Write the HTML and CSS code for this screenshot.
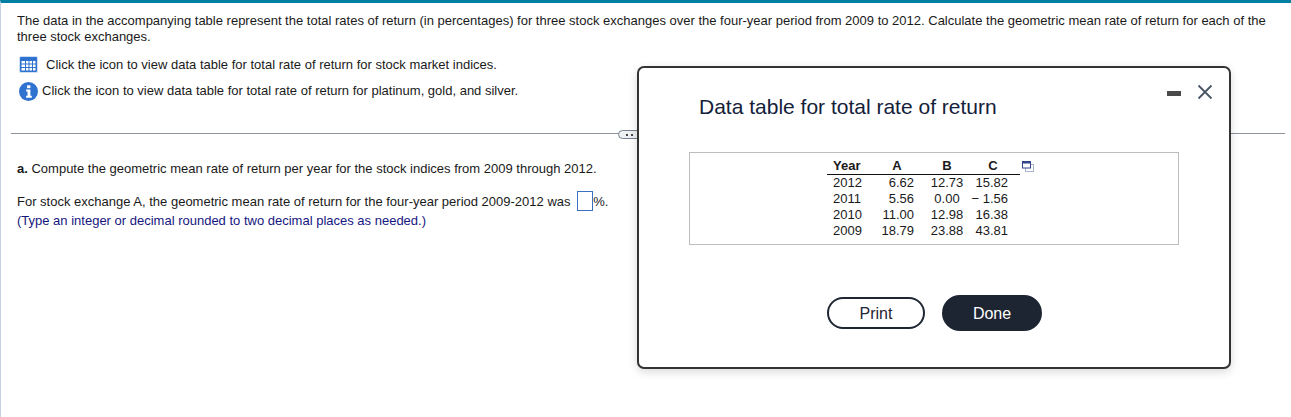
FILE: index.html
```html
<!DOCTYPE html>
<html lang="en">
<head>
    <meta charset="UTF-8">
    <title>Data table for total rate of return</title>
    <link rel="stylesheet" href="styles.css">
</head>
<body>
    <div class="page">
        <section class="question">
            <p class="intro">The data in the accompanying table represent the total rates of return (in percentages) for three stock exchanges over the four-year period from 2009 to 2012. Calculate the geometric mean rate of return for each of the three stock exchanges.</p>
            <div class="link-row link-grid">
                <svg class="icon" width="19" height="17" viewBox="0 0 19 17">
                    <rect x="0" y="0" width="19" height="17" rx="1.500" fill="#cfe0f6"/>
                    <rect x="1" y="1" width="17" height="15" rx="1" fill="#2f72cf"/>
                    <path d="M2.500 5h3.500v2.500H2.500zM7 5h2.500v2.500H7zM10.500 5H13v2.500h-2.500zM14 5h2.500v2.500H14zM2.500 8.500h3.500V11H2.500zM7 8.500h2.500V11H7zM10.500 8.500H13V11h-2.500zM14 8.500h2.500V11H14zM2.500 12h3.500v2.500H2.500zM7 12h2.500v2.500H7zM10.500 12H13v2.500h-2.500zM14 12h2.500v2.500H14z" fill="#fff"/>
                </svg>
                <span>Click the icon to view data table for total rate of return for stock market indices.</span>
            </div>
            <div class="link-row link-info">
                <svg class="icon" width="19" height="19" viewBox="0 0 20 20">
                    <circle cx="10" cy="10" r="10" fill="#2f72cf"/>
                    <rect x="8.500" y="3.500" width="3.500" height="3" fill="#fff"/>
                    <path d="M7.500 8h4.500v6.500h1.500v2h-6v-2h1.500v-4.500h-1.500z" fill="#fff"/>
                </svg>
                <span>Click the icon to view data table for total rate of return for platinum, gold, and silver.</span>
            </div>
        </section>

        <div class="divider"><span class="more"><i></i><i></i></span></div>

        <section class="answer">
            <p class="part"><b>a.</b> Compute the geometric mean rate of return per year for the stock indices from 2009 through 2012.</p>
            <p class="fill">For stock exchange A, the geometric mean rate of return for the four-year period 2009-2012 was <span class="blank"></span>%.</p>
            <p class="hint">(Type an integer or decimal rounded to two decimal places as needed.)</p>
        </section>
    </div>

    <div class="dialog">
        <div class="dialog-controls">
            <span class="minimize"></span>
            <svg width="16" height="16" viewBox="0 0 16 16">
                <path d="M1.500 1.500l13 13M14.500 1.500l-13 13" stroke="#4a5564" stroke-width="1.800" fill="none"/>
            </svg>
        </div>
        <h2>Data table for total rate of return</h2>
        <div class="table-box">
            <table class="rates">
                <thead>
                    <tr><th class="col-year">Year</th><th class="col-a">A</th><th class="col-b">B</th><th class="col-c">C</th></tr>
                </thead>
                <tbody>
                    <tr><td class="col-year">2012</td><td class="col-a">6.62</td><td class="col-b">12.73</td><td class="col-c">15.82</td></tr>
                    <tr><td class="col-year">2011</td><td class="col-a">5.56</td><td class="col-b">0.00</td><td class="col-c">&minus; 1.56</td></tr>
                    <tr><td class="col-year">2010</td><td class="col-a">11.00</td><td class="col-b">12.98</td><td class="col-c">16.38</td></tr>
                    <tr><td class="col-year">2009</td><td class="col-a">18.79</td><td class="col-b">23.88</td><td class="col-c">43.81</td></tr>
                </tbody>
            </table>
            <svg class="copy-icon" width="12" height="11" viewBox="0 0 12 11">
                <rect x="3.500" y="3.500" width="8" height="7" fill="#fff" stroke="#a9b4cf"/>
                <rect x="0.500" y="0.500" width="8" height="6.500" fill="#fff" stroke="#33468a"/>
                <rect x="0.500" y="0.500" width="8" height="2" fill="#33468a"/>
            </svg>
        </div>
        <div class="dialog-actions">
            <button class="btn btn-print">Print</button>
            <button class="btn btn-done">Done</button>
        </div>
    </div>
</body>
</html>
```

FILE: styles.css
```css
html, body {
    height: 100%;
}
body {
    font-family: "Liberation Sans", Arial, sans-serif;
    font-size: 13px;
    color: #1a1a1a;
    background-color: white;
    margin: 0;
    overflow: hidden;
}
p {
    margin: 0;
}
.page {
    box-sizing: border-box;
    height: 100%;
    border-top: 3px solid #007fa3;
    border-left: 1px solid #c6d0e2;
}
.question {
    padding: 10px 0 0 16px;
    width: 1258px;
}
.intro {
    line-height: 16px;
}
.link-row {
    display: flex;
    align-items: center;
    height: 19px;
}
.icon {
    flex: none;
    margin-left: 2px;
}
.link-grid {
    margin-top: 10px;
}
.link-grid span {
    margin-left: 8px;
}
.link-info {
    margin-top: 8px;
}
.link-info span {
    margin-left: 4px;
    position: relative;
    top: -1px;
}
.divider {
    margin: 32px 6px 0 10px;
    height: 1px;
    background-color: #8a939e;
    position: relative;
}
.more {
    position: absolute;
    left: 607px;
    top: -3px;
    box-sizing: border-box;
    width: 24px;
    height: 9px;
    padding-right: 2px;
    border: 1px solid #76808e;
    border-radius: 5px;
    background-color: #eef0f3;
    display: flex;
    align-items: center;
    justify-content: center;
    gap: 3px;
}
.more i {
    width: 2px;
    height: 2px;
    background-color: #444;
}
.answer {
    padding: 27px 0 0 16px;
}
.fill {
    margin-top: 15px;
    display: flex;
    align-items: center;
    height: 20px;
    white-space: pre-wrap;
}
.blank {
    box-sizing: border-box;
    width: 16px;
    height: 20px;
    margin-left: 3px;
    border: 1px solid #3b6fc0;
    background-color: white;
}
.hint {
    margin-top: 2px;
    color: #16167f;
    line-height: 15px;
}
.dialog {
    position: absolute;
    left: 637px;
    top: 66px;
    box-sizing: border-box;
    width: 594px;
    height: 303px;
    border: 2px solid #333;
    border-radius: 7px;
    background-color: white;
    box-shadow: 0 3px 10px rgba(0, 0, 0, 0.15);
}
.dialog-controls {
    position: absolute;
    right: 16px;
    top: 16px;
    display: flex;
    align-items: center;
    gap: 16px;
}
.minimize {
    width: 14px;
    height: 5px;
    margin-top: 3px;
    background-color: #4a4a4a;
}
.dialog h2 {
    margin: 27px 0 0 60px;
    font-size: 21px;
    font-weight: normal;
    line-height: 24px;
    color: #14213a;
}
.table-box {
    box-sizing: border-box;
    margin: 33px 0 0 50px;
    width: 490px;
    height: 93px;
    border: 1px solid #bdbdbd;
    padding: 5px 0 0 137px;
    display: flex;
    align-items: flex-start;
}
.rates {
    border-collapse: collapse;
    table-layout: fixed;
    width: 193px;
    font-size: 13px;
    line-height: 16px;
    white-space: nowrap;
}
.rates th {
    font-weight: bold;
    border-bottom: 1px solid #111;
}
.rates th,
.rates td {
    padding: 0;
}
.rates .col-year {
    width: 42px;
    padding-left: 6px;
    box-sizing: border-box;
    text-align: left;
}
.rates .col-a {
    width: 51px;
    box-sizing: border-box;
    text-align: right;
    padding-right: 6px;
}
.rates th.col-a {
    text-align: center;
    padding: 0 0 0 5px;
}
.rates .col-b {
    width: 50px;
    box-sizing: border-box;
    text-align: center;
    padding-left: 4px;
}
.rates .col-c {
    width: 50px;
    box-sizing: border-box;
    text-align: right;
    padding-right: 12px;
}
.rates th.col-c {
    text-align: center;
    padding: 0 4px 0 0;
}
.copy-icon {
    margin: 3px 0 0 2px;
}
.dialog-actions {
    display: flex;
    gap: 17px;
    margin: 50px 0 0 188px;
}
.btn {
    font-family: inherit;
    font-size: 16px;
    border-radius: 18px;
    padding: 2px 0 0;
}
.btn-print {
    width: 98px;
    height: 32px;
    margin-top: 2px;
    border: 2px solid #1f2633;
    background-color: white;
    color: #1f2633;
}
.btn-done {
    width: 100px;
    height: 36px;
    border: none;
    background-color: #1e2532;
    color: white;
}
```
